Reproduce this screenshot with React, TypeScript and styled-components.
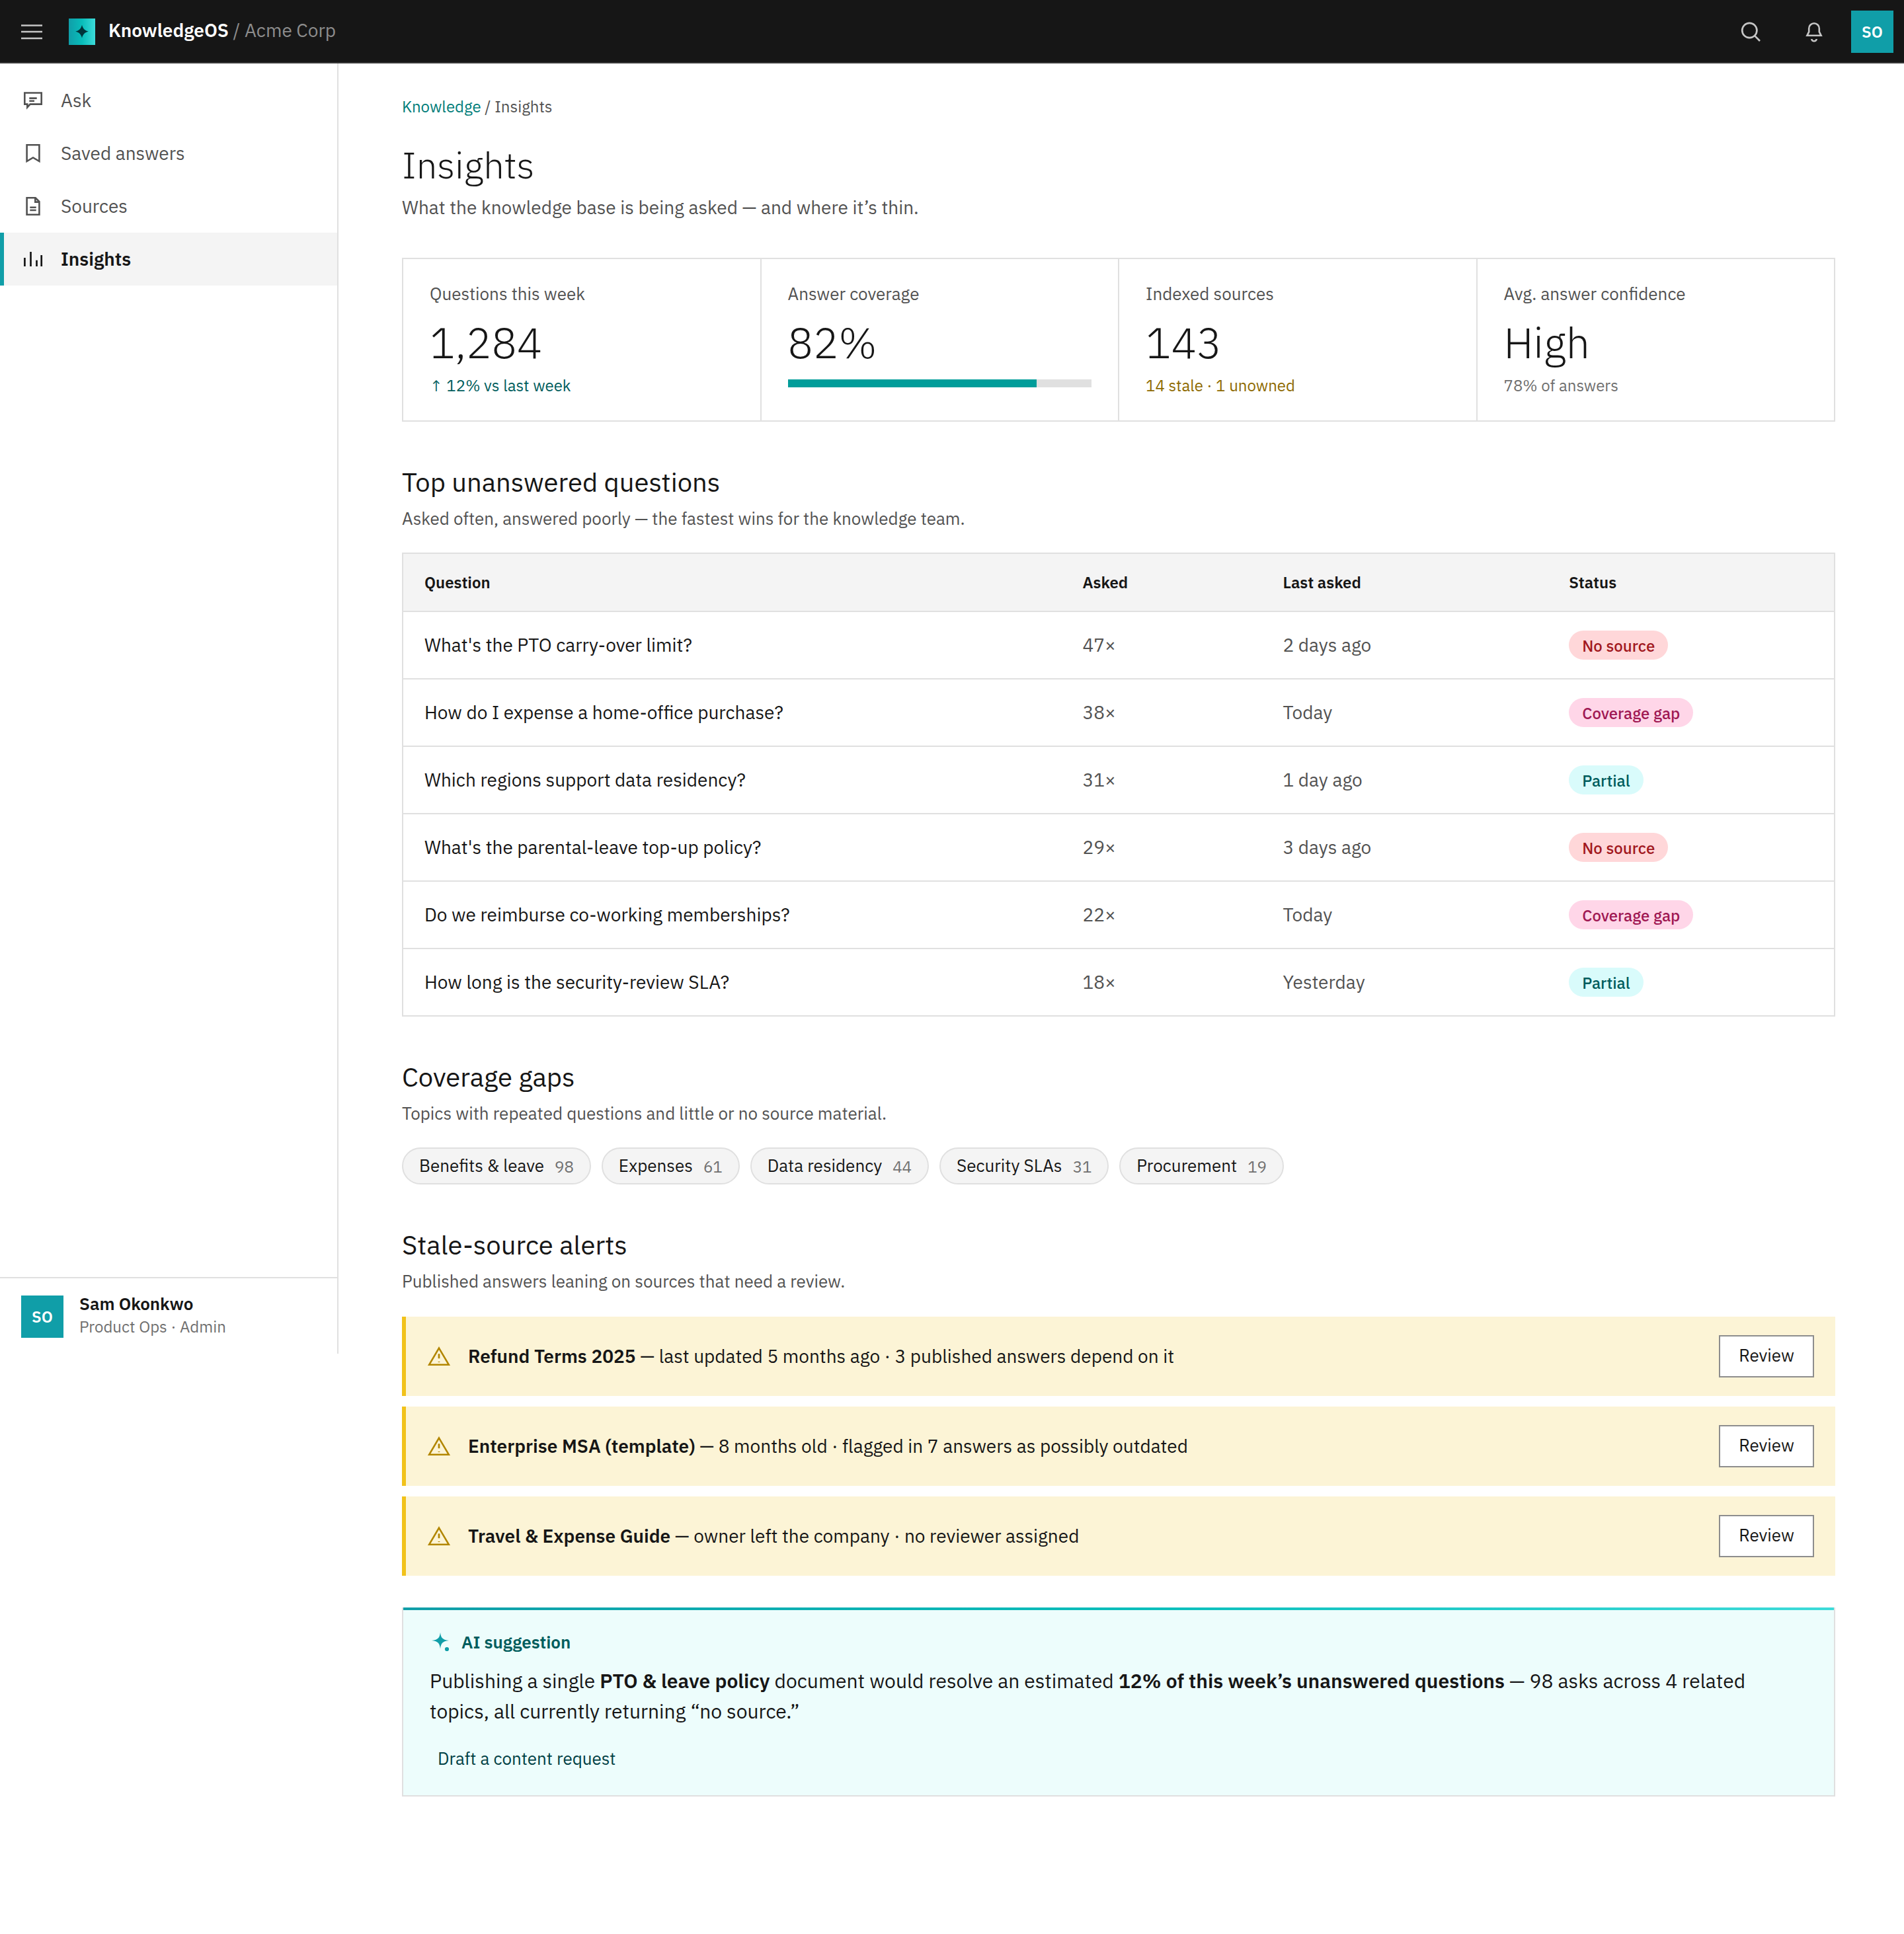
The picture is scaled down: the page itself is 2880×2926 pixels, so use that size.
import React from "react";
import styled, { createGlobalStyle } from "styled-components";

const color = {
  ink: "#161616",
  text: "#525252",
  muted: "#6f6f6f",
  line: "#e0e0e0",
  layer: "#f4f4f4",
  teal: "#109ea8",
  tealDark: "#005d5d",
  iconOnDark: "#c6c6c6",
};

const gradient = "linear-gradient(90deg, #109ea8, #08bdba 50%, #3ddbd9)";

const GlobalStyle = createGlobalStyle`
  *, *::before, *::after { box-sizing: border-box; }
  body {
    margin: 0;
    background: #ffffff;
    color: ${color.ink};
    font-family: "IBM Plex Sans", Roboto, "Liberation Sans", sans-serif;
    font-size: 28px;
    line-height: 40px;
  }
  h1, h2, p, ul { margin: 0; padding: 0; }
  ul { list-style: none; }
  button { font: inherit; color: inherit; cursor: pointer; border-radius: 0; }
  a { text-decoration: none; }
  svg { display: block; flex: none; }
  strong { font-weight: 600; }
`;

/* ---------- Header ---------- */

const Header = styled.header`
  display: flex;
  align-items: center;
  height: 96px;
  padding-right: 16px;
  background: ${color.ink};
  box-shadow: inset 0 -2px 0 #393939;
`;

const IconButton = styled.button`
  display: flex;
  align-items: center;
  justify-content: center;
  width: 96px;
  height: 96px;
  padding: 0;
  border: 0;
  background: transparent;
  color: ${color.iconOnDark};
`;

const Brand = styled.a`
  display: flex;
  align-items: center;
  gap: 20px;
  margin-left: 8px;
  color: #ffffff;
`;

const Logo = styled.span`
  width: 40px;
  height: 40px;
  background: ${gradient};
`;

const BrandName = styled.span`
  padding-bottom: 4px;
  font-weight: 600;
`;

const Tenant = styled.span`
  color: #8d8d8d;
  font-weight: 400;
`;

const HeaderActions = styled.div`
  display: flex;
  align-items: center;
  margin-left: auto;
`;

const Avatar = styled.span`
  display: flex;
  flex: none;
  align-items: center;
  justify-content: center;
  width: 64px;
  height: 64px;
  background: ${color.teal};
  color: #ffffff;
  font-size: 24px;
  font-weight: 600;
`;

const AvatarButton = styled.button`
  margin-left: 8px;
  padding: 0;
  border: 0;
  background: none;
`;

/* ---------- Sidebar ---------- */

const Body = styled.div`
  display: flex;
  align-items: flex-start;
`;

const Sidebar = styled.aside`
  display: flex;
  flex: none;
  flex-direction: column;
  width: 512px;
  height: 1952px;
  padding-top: 16px;
  border-right: 2px solid ${color.line};
`;

const NavLink = styled.a<{ $active?: boolean }>`
  display: flex;
  align-items: center;
  gap: 26px;
  height: 80px;
  padding-left: 28px;
  border-left: 6px solid ${(p) => (p.$active ? color.teal : "transparent")};
  background: ${(p) => (p.$active ? color.layer : "transparent")};
  color: ${(p) => (p.$active ? color.ink : color.text)};
  font-weight: ${(p) => (p.$active ? 600 : 400)};
`;

const Account = styled.div`
  display: flex;
  align-items: center;
  gap: 24px;
  margin-top: auto;
  padding: 20px 32px 18px;
  border-top: 2px solid ${color.line};
`;

const AccountText = styled.div`
  padding-bottom: 6px;
`;

const AccountName = styled.p`
  font-size: 26px;
  font-weight: 600;
  line-height: 36px;
`;

const AccountRole = styled.p`
  color: ${color.muted};
  font-size: 24px;
  line-height: 34px;
`;

/* ---------- Page ---------- */

const Main = styled.main`
  flex: 1;
  min-width: 0;
  max-width: 2360px;
  padding: 48px 96px 96px;
`;

const Breadcrumb = styled.nav`
  margin-bottom: 36px;
  color: ${color.text};
  font-size: 24px;
  line-height: 34px;
  a { color: #007d79; }
`;

const PageTitle = styled.h1`
  font-size: 56px;
  font-weight: 300;
  line-height: 70px;
`;

const PageLead = styled.p`
  margin-top: 8px;
  color: ${color.text};
  line-height: 44px;
`;

const Section = styled.section`
  margin-top: 64px;
`;

const SectionTitle = styled.h2`
  font-size: 40px;
  font-weight: 400;
  line-height: 54px;
`;

const SectionLead = styled.p`
  margin: 8px 0 32px;
  color: ${color.text};
  font-size: 26px;
  line-height: 40px;
`;

/* ---------- Stats ---------- */

const Stats = styled.div`
  display: grid;
  grid-template-columns: repeat(4, 1fr);
  gap: 2px;
  margin-top: 54px;
  border: 2px solid ${color.line};
  background: ${color.line};
`;

const Stat = styled.div`
  padding: 32px 40px 34px;
  background: #ffffff;
`;

const StatLabel = styled.p`
  color: ${color.text};
  font-size: 26px;
  line-height: 40px;
`;

const StatValue = styled.p`
  margin-top: 16px;
  font-size: 64px;
  font-weight: 300;
  line-height: 76px;
`;

const StatNote = styled.p<{ $color: string }>`
  margin-top: 8px;
  color: ${(p) => p.$color};
  font-size: 24px;
  line-height: 38px;
`;

const Meter = styled.div`
  height: 12px;
  margin-top: 18px;
  background: ${color.line};
`;

const MeterFill = styled.div`
  height: 100%;
  background: #009d9a;
`;

/* ---------- Table ---------- */

const Table = styled.table`
  width: 100%;
  border: 2px solid ${color.line};
  border-spacing: 0;
  table-layout: fixed;
`;

const Th = styled.th<{ $width: string }>`
  width: ${(p) => p.$width};
  height: 88px;
  padding: 0 32px;
  border-bottom: 2px solid ${color.line};
  background: ${color.layer};
  font-size: 24px;
  font-weight: 600;
  text-align: left;
`;

const Td = styled.td<{ $strong?: boolean }>`
  height: 102px;
  padding: 0 32px;
  border-bottom: 2px solid ${color.line};
  color: ${(p) => (p.$strong ? color.ink : color.text)};
  tr:last-child > & {
    height: 100px;
    border-bottom: 0;
  }
`;

type Status = "No source" | "Coverage gap" | "Partial";

const tagColors: Record<Status, { bg: string; fg: string }> = {
  "No source": { bg: "#ffd7d9", fg: "#a2191f" },
  "Coverage gap": { bg: "#ffd6e8", fg: "#9f1853" },
  Partial: { bg: "#d9fbfb", fg: "#005d5d" },
};

const Tag = styled.span<{ $status: Status }>`
  display: flex;
  align-items: center;
  width: fit-content;
  height: 44px;
  padding: 2px 20px 0;
  border-radius: 22px;
  background: ${(p) => tagColors[p.$status].bg};
  color: ${(p) => tagColors[p.$status].fg};
  font-size: 24px;
  font-weight: 500;
`;

/* ---------- Topics ---------- */

const Topics = styled.ul`
  display: flex;
  flex-wrap: wrap;
  gap: 16px;
`;

const Topic = styled.li`
  display: flex;
  align-items: center;
  gap: 16px;
  height: 56px;
  padding: 0 24px;
  border: 2px solid ${color.line};
  border-radius: 28px;
  background: ${color.layer};
  font-size: 26px;
`;

const TopicName = styled.span`
  padding-bottom: 2px;
`;

const TopicCount = styled.span`
  padding-top: 2px;
  color: ${color.muted};
  font-family: "IBM Plex Mono", "Liberation Mono", monospace;
  font-size: 24px;
`;

/* ---------- Alerts ---------- */

const Alerts = styled.ul`
  display: flex;
  flex-direction: column;
  gap: 16px;
  margin-top: 34px;
`;

const Alert = styled.li`
  display: flex;
  align-items: center;
  gap: 24px;
  height: 120px;
  padding: 0 32px 0 30px;
  border-left: 6px solid #f1c21b;
  background: #fcf4d6;
`;

const AlertText = styled.p`
  flex: 1;
`;

const ReviewButton = styled.button`
  height: 64px;
  padding: 0 28px 4px;
  border: 2px solid #8d8d8d;
  background: #ffffff;
  font-size: 26px;
`;

/* ---------- Suggestion ---------- */

const Suggestion = styled.section`
  margin-top: 48px;
  padding: 34px 40px 22px;
  border: 2px solid ${color.line};
  border-top: 0;
  background: ${gradient} top / 100% 4px no-repeat padding-box, #edfdfc;
`;

const SuggestionTitle = styled.h2`
  display: flex;
  align-items: center;
  gap: 16px;
  color: ${color.tealDark};
  font-size: 26px;
  font-weight: 600;
  line-height: 36px;
`;

const SuggestionText = styled.p`
  margin: 18px 0;
  font-size: 30px;
  line-height: 46px;
`;

const GhostButton = styled.button`
  height: 64px;
  padding: 0 12px 4px;
  border: 0;
  background: transparent;
  color: #004144;
  font-size: 26px;
`;

/* ---------- Icons ---------- */

type IconProps = { size?: number; stroke?: number; children: React.ReactNode };

const Icon = ({ size = 32, stroke = 2.6, children }: IconProps) => (
  <svg
    width={size}
    height={size}
    viewBox={`0 0 ${size} ${size}`}
    fill="none"
    stroke="currentColor"
    strokeWidth={stroke}
    aria-hidden="true"
  >
    {children}
  </svg>
);

const MenuIcon = () => (
  <Icon size={40} stroke={2.6}>
    <path d="M4 10.5h32M4 20h32M4 30h32" />
  </Icon>
);

const SearchIcon = () => (
  <Icon stroke={2.7}>
    <circle cx="14.3" cy="14" r="11.1" />
    <path d="M22.4 22.4 30 30" />
  </Icon>
);

const BellIcon = () => (
  <Icon stroke={2.6}>
    <path d="M16 3.2a7.8 7.8 0 0 1 7.8 7.8v5.2l2.8 5.6H5.4l2.8-5.6V11A7.8 7.8 0 0 1 16 3.2z" />
    <path d="M12.4 27v.6a3.6 2.6 0 0 0 7.2 0V27" />
  </Icon>
);

const AskIcon = () => (
  <Icon>
    <path d="M7.3 21.6H3.3V4.5h25.4v17.1H11.6l-4.3 4.7z" />
    <path d="M10.3 12.6h11.4M10.3 16.8h7.7" />
  </Icon>
);

const BookmarkIcon = () => (
  <Icon>
    <path d="M6.6 3.3h18.8v24.7L16 22.4 6.6 28z" />
  </Icon>
);

const DocumentIcon = () => (
  <Icon>
    <path d="M6.6 3.3h13l5.8 5.8v19.6H6.6z" />
    <path d="M19.3 3.3v6.3h6.1M11.3 17.7h9.4M11.3 22h9.4" />
  </Icon>
);

const ChartIcon = () => (
  <Icon stroke={2.7}>
    <path d="M3.4 27V14M12.5 27V5M21.5 27v-9.3M28.7 27V10" />
  </Icon>
);

const WarningIcon = () => (
  <Icon size={40}>
    <g stroke="#b28600">
      <path d="M20 7.6 34.8 32.7H5.2z" />
      <path d="M20 16.3v7M20 27.9v1" strokeWidth={2.7} />
    </g>
  </Icon>
);

const SparkIcon = () => (
  <Icon>
    <g fill="#109ea8" stroke="none">
      <path d="M16 1.8C17 9.6 18.6 12.8 29 14 18.6 15.2 17 18.8 16 26.4 15 18.8 13.4 15.2 3 14 13.4 12.8 15 9.6 16 1.8z" />
      <circle cx="26" cy="27" r="3.1" />
    </g>
  </Icon>
);

const LogoMark = () => (
  <Icon size={40}>
    <path
      d="M20 9.8C21.6 15.4 24 18 29.8 19.6 24 21.2 21.6 23.8 20 29.4 18.4 23.8 16 21.2 10.2 19.6 16 18 18.4 15.4 20 9.8z"
      fill="#00343a"
      stroke="none"
    />
  </Icon>
);

/* ---------- Data ---------- */

const navItems = [
  { label: "Ask", icon: <AskIcon /> },
  { label: "Saved answers", icon: <BookmarkIcon /> },
  { label: "Sources", icon: <DocumentIcon /> },
  { label: "Insights", icon: <ChartIcon />, active: true },
];

const questions: { question: string; asked: number; last: string; status: Status }[] = [
  { question: "What's the PTO carry-over limit?", asked: 47, last: "2 days ago", status: "No source" },
  { question: "How do I expense a home-office purchase?", asked: 38, last: "Today", status: "Coverage gap" },
  { question: "Which regions support data residency?", asked: 31, last: "1 day ago", status: "Partial" },
  { question: "What's the parental-leave top-up policy?", asked: 29, last: "3 days ago", status: "No source" },
  { question: "Do we reimburse co-working memberships?", asked: 22, last: "Today", status: "Coverage gap" },
  { question: "How long is the security-review SLA?", asked: 18, last: "Yesterday", status: "Partial" },
];

const topics = [
  { name: "Benefits & leave", count: 98 },
  { name: "Expenses", count: 61 },
  { name: "Data residency", count: 44 },
  { name: "Security SLAs", count: 31 },
  { name: "Procurement", count: 19 },
];

const alerts = [
  { source: "Refund Terms 2025", detail: "last updated 5 months ago · 3 published answers depend on it" },
  { source: "Enterprise MSA (template)", detail: "8 months old · flagged in 7 answers as possibly outdated" },
  { source: "Travel & Expense Guide", detail: "owner left the company · no reviewer assigned" },
];

const coverage = 82;

export default function App() {
  return (
    <>
      <GlobalStyle />
      <Header>
        <IconButton aria-label="Toggle navigation">
          <MenuIcon />
        </IconButton>
        <Brand href="#">
          <Logo>
            <LogoMark />
          </Logo>
          <BrandName>
            KnowledgeOS <Tenant>/ Acme Corp</Tenant>
          </BrandName>
        </Brand>
        <HeaderActions>
          <IconButton aria-label="Search">
            <SearchIcon />
          </IconButton>
          <IconButton aria-label="Notifications">
            <BellIcon />
          </IconButton>
          <AvatarButton aria-label="Account">
            <Avatar>SO</Avatar>
          </AvatarButton>
        </HeaderActions>
      </Header>

      <Body>
        <Sidebar>
          <nav aria-label="Primary">
            {navItems.map((item) => (
              <NavLink
                key={item.label}
                href="#"
                $active={item.active}
                aria-current={item.active ? "page" : undefined}
              >
                {item.icon}
                {item.label}
              </NavLink>
            ))}
          </nav>
          <Account>
            <Avatar>SO</Avatar>
            <AccountText>
              <AccountName>Sam Okonkwo</AccountName>
              <AccountRole>Product Ops · Admin</AccountRole>
            </AccountText>
          </Account>
        </Sidebar>

        <Main>
          <Breadcrumb aria-label="Breadcrumb">
            <a href="#">Knowledge</a> / Insights
          </Breadcrumb>
          <PageTitle>Insights</PageTitle>
          <PageLead>What the knowledge base is being asked — and where it’s thin.</PageLead>

          <Stats>
            <Stat>
              <StatLabel>Questions this week</StatLabel>
              <StatValue>1,284</StatValue>
              <StatNote $color={color.tealDark}>↑ 12% vs last week</StatNote>
            </Stat>
            <Stat>
              <StatLabel>Answer coverage</StatLabel>
              <StatValue>{coverage}%</StatValue>
              <Meter role="img" aria-label="Answer coverage">
                <MeterFill style={{ width: `${coverage}%` }} />
              </Meter>
            </Stat>
            <Stat>
              <StatLabel>Indexed sources</StatLabel>
              <StatValue>143</StatValue>
              <StatNote $color="#8e6a00">14 stale · 1 unowned</StatNote>
            </Stat>
            <Stat>
              <StatLabel>Avg. answer confidence</StatLabel>
              <StatValue>High</StatValue>
              <StatNote $color={color.muted}>78% of answers</StatNote>
            </Stat>
          </Stats>

          <Section>
            <SectionTitle>Top unanswered questions</SectionTitle>
            <SectionLead>Asked often, answered poorly — the fastest wins for the knowledge team.</SectionLead>
            <Table>
              <thead>
                <tr>
                  <Th $width="46%">Question</Th>
                  <Th $width="14%">Asked</Th>
                  <Th $width="20%">Last asked</Th>
                  <Th $width="20%">Status</Th>
                </tr>
              </thead>
              <tbody>
                {questions.map((q) => (
                  <tr key={q.question}>
                    <Td $strong>{q.question}</Td>
                    <Td>{q.asked}×</Td>
                    <Td>{q.last}</Td>
                    <Td>
                      <Tag $status={q.status}>{q.status}</Tag>
                    </Td>
                  </tr>
                ))}
              </tbody>
            </Table>
          </Section>

          <Section>
            <SectionTitle>Coverage gaps</SectionTitle>
            <SectionLead>Topics with repeated questions and little or no source material.</SectionLead>
            <Topics>
              {topics.map((t) => (
                <Topic key={t.name}>
                  <TopicName>{t.name}</TopicName>
                  <TopicCount>{t.count}</TopicCount>
                </Topic>
              ))}
            </Topics>
          </Section>

          <Section>
            <SectionTitle>Stale-source alerts</SectionTitle>
            <SectionLead>Published answers leaning on sources that need a review.</SectionLead>
            <Alerts>
              {alerts.map((a) => (
                <Alert key={a.source}>
                  <WarningIcon />
                  <AlertText>
                    <strong>{a.source}</strong> — {a.detail}
                  </AlertText>
                  <ReviewButton aria-label={`Review ${a.source}`}>Review</ReviewButton>
                </Alert>
              ))}
            </Alerts>
          </Section>

          <Suggestion>
            <SuggestionTitle>
              <SparkIcon />
              AI suggestion
            </SuggestionTitle>
            <SuggestionText>
              Publishing a single <strong>PTO &amp; leave policy</strong> document would resolve an estimated{" "}
              <strong>12% of this week’s unanswered questions</strong> — 98 asks across 4 related topics, all
              currently returning “no source.”
            </SuggestionText>
            <GhostButton>Draft a content request</GhostButton>
          </Suggestion>
        </Main>
      </Body>
    </>
  );
}
